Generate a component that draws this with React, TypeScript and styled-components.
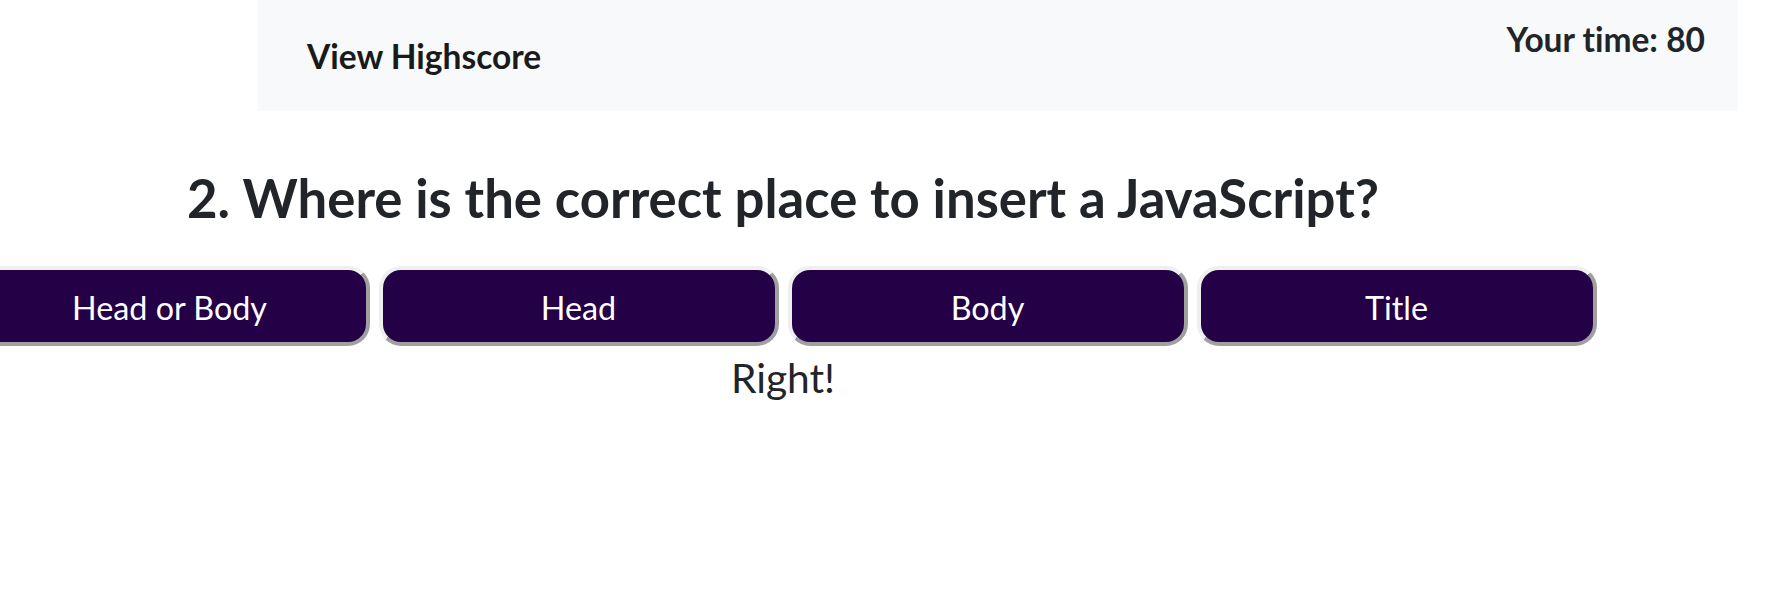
import React from "react";
import styled, { createGlobalStyle } from "styled-components";

const GlobalStyle = createGlobalStyle`
  html, body {
    margin: 0;
    padding: 0;
    background: #ffffff;
  }
  body {
    font-family: Lato, "Noto Sans", "Liberation Sans", sans-serif;
    font-variant-ligatures: none;
    color: #212529;
    overflow: hidden;
  }
`;

const Page = styled.div`
  width: 1788px;
  height: 600px;
`;

const Header = styled.header`
  margin-left: 258px;
  width: 1480px;
  height: 111px;
  box-sizing: border-box;
  background: #f8f9fa;
  display: flex;
  justify-content: space-between;
  align-items: flex-start;
  padding: 0 33px 0 49px;
`;

const Brand = styled.a`
  margin-top: 40px;
  font-size: 33.5px;
  font-weight: 700;
  line-height: 1;
  color: #1a1a1a;
  text-decoration: none;
  cursor: pointer;
`;

const Timer = styled.div`
  margin-top: 23px;
  font-size: 33.5px;
  font-weight: 700;
  line-height: 1;
  color: #212529;
`;

const Main = styled.main`
  width: 1566px;
  display: flex;
  flex-direction: column;
  align-items: center;
`;

const Question = styled.h1`
  margin: 61px 0 0;
  font-size: 52.7px;
  font-weight: 700;
  line-height: 1;
  color: #212529;
  white-space: nowrap;
`;

const Choices = styled.div`
  margin-top: 41px;
  width: 100%;
  display: flex;
  justify-content: center;
  gap: 9px;
`;

const Choice = styled.button`
  flex: 0 0 400px;
  width: 400px;
  height: 80px;
  box-sizing: border-box;
  border-style: solid;
  border-width: 4px;
  border-color: #efefef #a0a0a0 #a0a0a0 #efefef;
  border-radius: 22px;
  background: #240046;
  color: #ffffff;
  font-family: Lato, "Noto Sans", sans-serif;
  font-variant-ligatures: none;
  font-size: 32.3px;
  font-weight: 400;
  display: flex;
  align-items: center;
  justify-content: center;
  padding: 3px 0 0;
  cursor: pointer;
`;

const Feedback = styled.div`
  margin-top: 12px;
  font-size: 40.7px;
  line-height: 1;
  color: #212529;
`;

const choices = ["Head or Body", "Head", "Body", "Title"];

export default function App() {
  return (
    <Page>
      <GlobalStyle />
      <Header>
        <Brand>View Highscore</Brand>
        <Timer>Your time: 80</Timer>
      </Header>
      <Main>
        <Question>2. Where is the correct place to insert a JavaScript?</Question>
        <Choices>
          {choices.map((c) => (
            <Choice key={c}>{c}</Choice>
          ))}
        </Choices>
        <Feedback>Right!</Feedback>
      </Main>
    </Page>
  );
}
